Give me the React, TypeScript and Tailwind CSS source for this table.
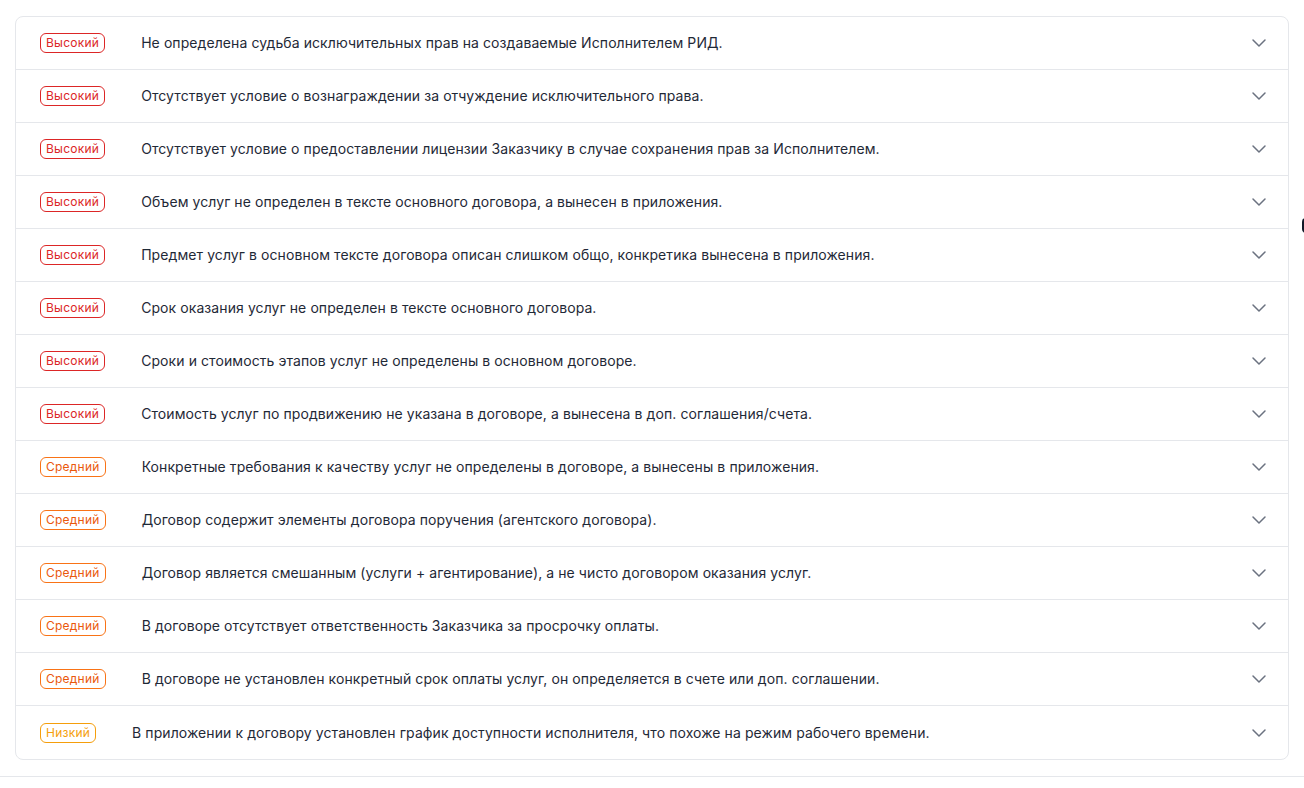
import { ChevronDown } from "lucide-react";

type Level = "high" | "medium" | "low";

const levelLabel: Record<Level, string> = {
  high: "Высокий",
  medium: "Средний",
  low: "Низкий",
};

const levelClass: Record<Level, string> = {
  high: "border-[#dc2626] text-[#dc2626]",
  medium: "border-[#f97316] text-[#ea580c]",
  low: "border-[#f59e0b] text-[#f59e0b]",
};

const risks: { level: Level; text: string }[] = [
  { level: "high", text: "Не определена судьба исключительных прав на создаваемые Исполнителем РИД." },
  { level: "high", text: "Отсутствует условие о вознаграждении за отчуждение исключительного права." },
  { level: "high", text: "Отсутствует условие о предоставлении лицензии Заказчику в случае сохранения прав за Исполнителем." },
  { level: "high", text: "Объем услуг не определен в тексте основного договора, а вынесен в приложения." },
  { level: "high", text: "Предмет услуг в основном тексте договора описан слишком общо, конкретика вынесена в приложения." },
  { level: "high", text: "Срок оказания услуг не определен в тексте основного договора." },
  { level: "high", text: "Сроки и стоимость этапов услуг не определены в основном договоре." },
  { level: "high", text: "Стоимость услуг по продвижению не указана в договоре, а вынесена в доп. соглашения/счета." },
  { level: "medium", text: "Конкретные требования к качеству услуг не определены в договоре, а вынесены в приложения." },
  { level: "medium", text: "Договор содержит элементы договора поручения (агентского договора)." },
  { level: "medium", text: "Договор является смешанным (услуги + агентирование), а не чисто договором оказания услуг." },
  { level: "medium", text: "В договоре отсутствует ответственность Заказчика за просрочку оплаты." },
  { level: "medium", text: "В договоре не установлен конкретный срок оплаты услуг, он определяется в счете или доп. соглашении." },
  { level: "low", text: "В приложении к договору установлен график доступности исполнителя, что похоже на режим рабочего времени." },
];

function RiskRow({ level, text }: { level: Level; text: string }) {
  return (
    <button
      type="button"
      className="flex h-[53px] w-full items-center border-b border-[#e5e7eb] pl-6 pr-[17px] text-left last:border-b-0"
    >
      <div className="flex flex-1 items-center gap-9">
        <span
          className={`rounded-md border px-[5px] py-px text-xs leading-4 tracking-[0.02em] ${levelClass[level]}`}
        >
          {levelLabel[level]}
        </span>
        <span className="text-sm tracking-[0.006em] text-[#1f2937]">{text}</span>
      </div>
      <ChevronDown className="h-6 w-6 text-[#6b7280]" strokeWidth={1.5} />
    </button>
  );
}

export default function App() {
  return (
    <div className="relative min-h-[788px] bg-white font-['Inter',sans-serif]">
      <div className="px-[15px] pt-4">
        <div className="overflow-hidden rounded-lg border border-[#e5e7eb] bg-white">
          {risks.map((r, i) => (
            <RiskRow key={i} level={r.level} text={r.text} />
          ))}
        </div>
      </div>
      <div className="mt-4 border-t border-[#e5e7eb]" />
      <div className="absolute top-[218px] right-[-6px] h-[15px] w-2 rounded-full bg-[#111827]" />
    </div>
  );
}
